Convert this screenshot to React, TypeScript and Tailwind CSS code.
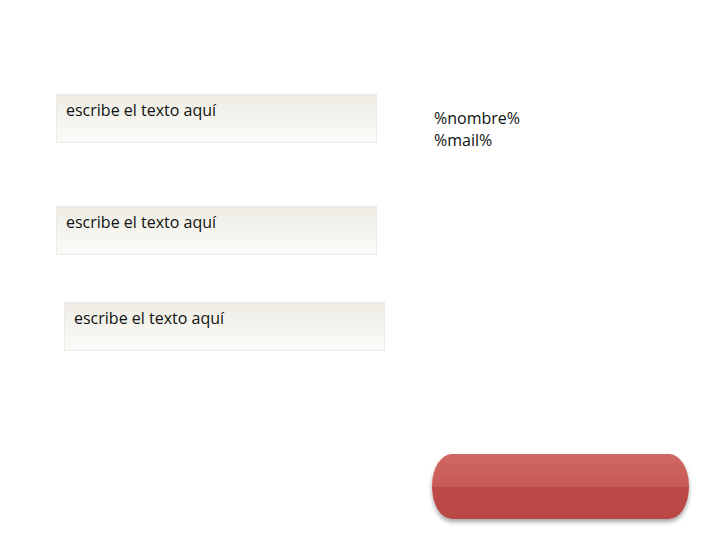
const boxes = [
  { offset: 'mt-0 ml-0' },
  { offset: 'mt-[63px] ml-0' },
  { offset: 'mt-[47px] ml-2' },
];

function TextBox({ className }: { className: string }) {
  return (
    <div
      className={`${className} w-[321px] h-[49px] border border-[#ebeae6] bg-gradient-to-b from-[#eeece4] to-[#fbfbf9] px-[9px] pt-[4px] text-[16px] leading-[22px] text-[#111]`}
    >
      escribe el texto aquí
    </div>
  );
}

export default function App() {
  return (
    <div className="w-[720px] h-[540px] bg-white flex font-['Open_Sans',sans-serif]">
      <div className="w-[376px] ml-[56px] pt-[94px] flex flex-col items-start">
        {boxes.map((b, i) => (
          <TextBox key={i} className={b.offset} />
        ))}
      </div>
      <div className="flex flex-col items-start">
        <div className="mt-[107px] ml-[2px] text-[16px] leading-[22px] text-[#111]">
          <p>%nombre%</p>
          <p>%mail%</p>
        </div>
        <button className="mt-[303px] w-[257px] h-[65px] rounded-[20px/32px] overflow-hidden flex flex-col shadow-[0_3px_4px_rgba(0,0,0,0.35)]">
          <span className="h-1/2 w-full bg-gradient-to-b from-[#cf6863] to-[#c95a55]" />
          <span className="h-1/2 w-full bg-gradient-to-b from-[#bb4a46] to-[#b94845]" />
        </button>
      </div>
    </div>
  );
}
